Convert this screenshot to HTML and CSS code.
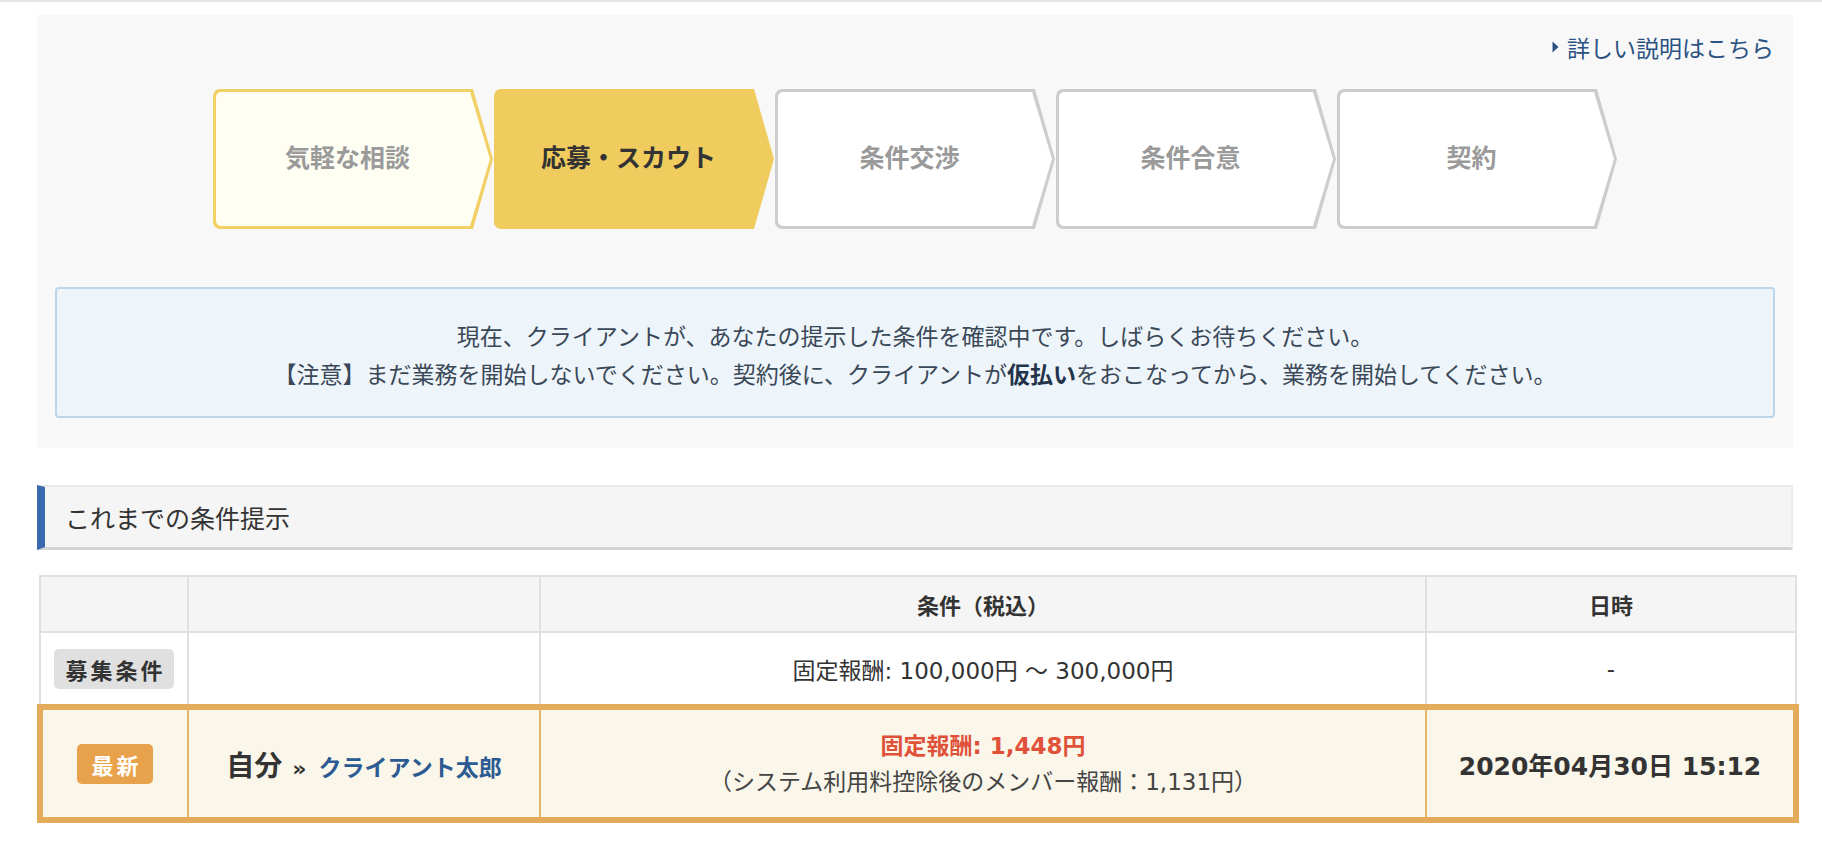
FILE: index.html
```html
<!DOCTYPE html>
<html lang="ja">
<head>
<meta charset="utf-8">
<title>条件提示</title>
<link rel="stylesheet" href="styles.css">
</head>
<body>
<div class="topline"></div>
<div class="page">
  <section class="flow-panel">
    <div class="help-row">
      <a class="help-link" href="#"><svg class="help-arrow" width="7" height="12" viewBox="0 0 7 12"><path d="M0.5 0.5 L6.5 6 L0.5 11.5 Z" fill="#2b5283"/></svg>詳しい説明はこちら</a>
    </div>
    <ol class="steps">
      <li class="step step-done"><span class="step-inner">気軽な相談</span></li>
      <li class="step step-active"><span class="step-inner">応募・スカウト</span></li>
      <li class="step"><span class="step-inner">条件交渉</span></li>
      <li class="step"><span class="step-inner">条件合意</span></li>
      <li class="step"><span class="step-inner">契約</span></li>
    </ol>
    <div class="notice">
      <p>現在、クライアントが、あなたの提示した条件を確認中です。しばらくお待ちください。</p>
      <p>【注意】まだ業務を開始しないでください。契約後に、クライアントが<strong>仮払い</strong>をおこなってから、業務を開始してください。</p>
    </div>
  </section>

  <h2 class="section-title">これまでの条件提示</h2>

  <table class="offers">
    <colgroup>
      <col class="c1"><col class="c2"><col class="c3"><col class="c4">
    </colgroup>
    <thead>
      <tr><th></th><th></th><th>条件（税込）</th><th>日時</th></tr>
    </thead>
    <tbody>
      <tr class="row-base">
        <td><span class="badge badge-gray">募集条件</span></td>
        <td></td>
        <td>固定報酬: 100,000円 〜 300,000円</td>
        <td>-</td>
      </tr>
      <tr class="row-latest">
        <td><span class="badge badge-new">最新</span></td>
        <td class="who"><span class="me">自分</span><span class="arrow">»</span><a class="client" href="#">クライアント太郎</a></td>
        <td class="cond">
          <div class="price">固定報酬: 1,448円</div>
          <div class="net">（システム利用料控除後のメンバー報酬：1,131円）</div>
        </td>
        <td class="date">2020年04月30日 15:12</td>
      </tr>
    </tbody>
  </table>
</div>
</body>
</html>
```
FILE: styles.css
```css
body {
  margin: 0;
  background: #fff;
  color: #333;
  font-family: "Noto Sans CJK JP", "Noto Sans", sans-serif;
}

.topline {
  height: 2px;
  background: #e6e6e6;
}

.page {
  margin: 13px 29px 40px 37px;
}

/* ---------- flow panel ---------- */
.flow-panel {
  background: #f8f8f8;
  padding: 15px 18px 30px;
}

.help-row {
  display: flex;
  justify-content: flex-end;
  padding-right: 1px;
}

.help-link {
  display: flex;
  align-items: center;
  gap: 8px;
  color: #2b5283;
  font-size: 23px;
  line-height: 34px;
  text-decoration: none;
}

.steps {
  list-style: none;
  margin: 25px 0 0;
  padding: 0;
  display: flex;
  justify-content: center;
  gap: 1px;
}

.step {
  box-sizing: border-box;
  width: 280px;
  height: 140px;
  padding: 3px;
  background: #cdcdcd;
  border-radius: 7px 0 0 7px;
  clip-path: polygon(0 0, calc(100% - 20px) 0, 100% 50%, calc(100% - 20px) 100%, 0 100%);
}

.step-inner {
  box-sizing: border-box;
  display: flex;
  align-items: center;
  justify-content: center;
  height: 100%;
  padding: 0 11px 6px 0;
  background: #fff;
  border-radius: 5px 0 0 5px;
  clip-path: polygon(0 0, calc(100% - 20px) 0, 100% 50%, calc(100% - 20px) 100%, 0 100%);
  color: #9a9a9a;
  font-size: 25px;
  font-weight: 700;
}

.step-done {
  background: #f1d065;
}
.step-done .step-inner {
  background: #fffef3;
}

.step-active {
  background: #f0cc5e;
}
.step-active .step-inner {
  background: #f0cc5e;
  color: #333;
}

.notice {
  margin-top: 58px;
  border: 2px solid #bcd5e8;
  border-radius: 4px;
  background: #eef5fa;
  padding: 27px 20px 24px;
  text-align: center;
  color: #3a4858;
  font-size: 23px;
  line-height: 38px;
}
.notice p {
  margin: 0;
}
.notice strong {
  color: #23344a;
  font-weight: 700;
}

/* ---------- section title ---------- */
.section-title {
  margin: 37px 0 0;
  background: #f5f5f5;
  border-top: 2px solid #e8e8e8;
  border-right: 2px solid #ececec;
  border-bottom: 3px solid #d4d4d4;
  border-left: 8px solid #3b69ad;
  padding-left: 20px;
  line-height: 60px;
  font-size: 25px;
  font-weight: 400;
  color: #333;
}

/* ---------- table ---------- */
.offers {
  margin-top: 25px;
  width: 1756px;
  border-collapse: collapse;
  table-layout: fixed;
  font-family: "DejaVu Sans", "Noto Sans CJK JP", sans-serif;
}
.c1 { width: 148px; }
.c2 { width: 352px; }
.c3 { width: 886px; }
.c4 { width: 370px; }

.offers th,
.offers td {
  border: 2px solid #e0e0e0;
  padding: 0;
  text-align: center;
  vertical-align: middle;
  font-size: 23px;
  color: #333;
}

.offers thead th {
  height: 54px;
  background: #f5f5f5;
  font-size: 22px;
  font-weight: 700;
  font-family: "Noto Sans CJK JP", sans-serif;
}

.row-base td {
  height: 71px;
  background: #fff;
}

.row-latest td {
  height: 107px;
  background: #faf6e9;
  border-top: 6px solid #e4ab5a;
  border-bottom: 6px solid #e4ab5a;
  border-left: 2px solid #e8b66a;
  border-right: 2px solid #e8b66a;
}
.row-latest td:first-child {
  border-left: 6px solid #e4ab5a;
}
.row-latest td:last-child {
  border-right: 6px solid #e4ab5a;
}

.badge {
  display: inline-block;
  height: 40px;
  line-height: 40px;
  border-radius: 5px;
  font-family: "Noto Sans CJK JP", sans-serif;
  font-size: 22px;
  font-weight: 700;
  letter-spacing: 3px;
}
.badge-gray {
  background: #e0e0e0;
  color: #333;
  padding: 0 8px 0 11px;
}
.badge-new {
  background: #e8a24b;
  color: #fff;
  padding: 0 11px 0 14px;
}

.who {
  white-space: nowrap;
}
.me {
  font-family: "Noto Sans CJK JP", sans-serif;
  font-size: 28px;
  font-weight: 700;
  color: #333;
}
.arrow {
  margin: 0 12px 0 10px;
  font-size: 22px;
  font-weight: 700;
  color: #333;
}
.client {
  font-family: "Noto Sans CJK JP", sans-serif;
  color: #2c5a92;
  font-size: 23px;
  font-weight: 700;
  text-decoration: none;
}

.cond {
  line-height: 36px;
}
.price {
  color: #e0513a;
  font-weight: 700;
}
.net {
  color: #444;
}

.offers td.date {
  font-size: 25px;
  font-weight: 700;
}
```
